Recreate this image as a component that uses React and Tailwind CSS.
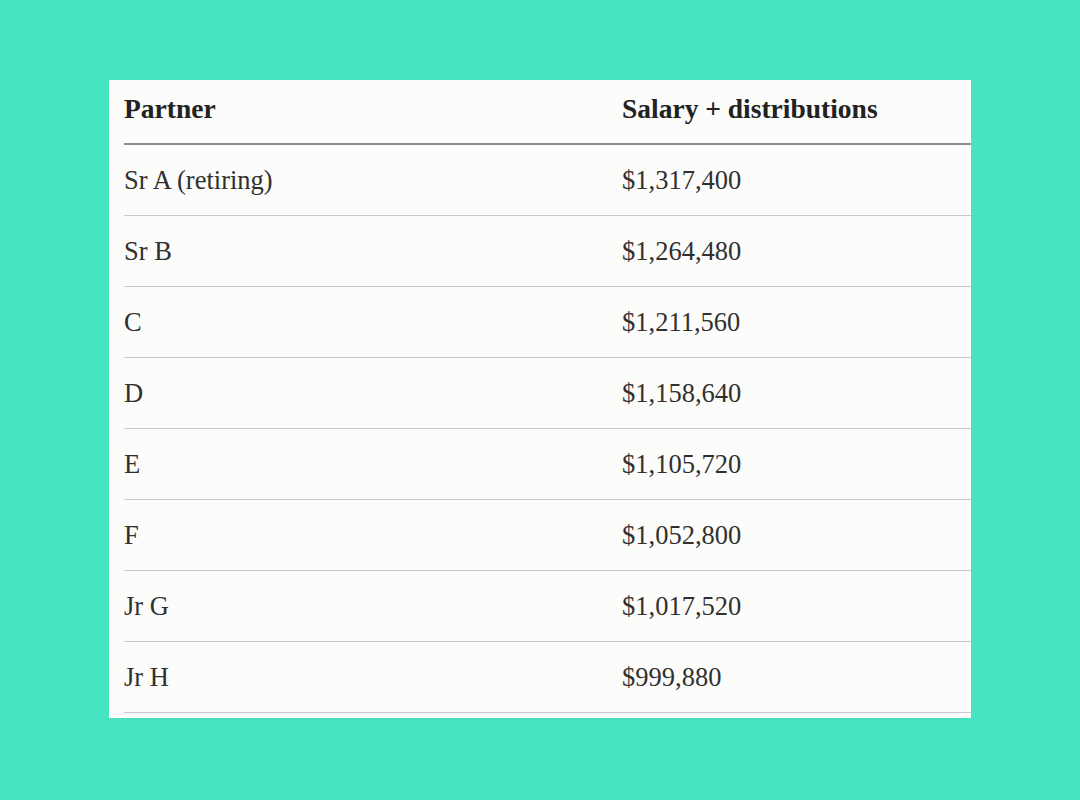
const rows = [
  ["Sr A (retiring)", "$1,317,400"],
  ["Sr B", "$1,264,480"],
  ["C", "$1,211,560"],
  ["D", "$1,158,640"],
  ["E", "$1,105,720"],
  ["F", "$1,052,800"],
  ["Jr G", "$1,017,520"],
  ["Jr H", "$999,880"],
];

export default function App() {
  return (
    <div className="flex h-[800px] w-full justify-center bg-[#46e3c0] pt-[80px] font-['Liberation_Serif',serif]">
      <div className="h-[638px] w-[862px] overflow-hidden bg-[#fcfcfa] pl-[15px]">
        <div className="flex h-[65px] items-center border-b-2 border-[#8c8c8c] pb-[6px] text-[27.5px] font-bold text-[#222222]">
          <div className="w-[498px]">Partner</div>
          <div>Salary + distributions</div>
        </div>
        {rows.map(([name, amount]) => (
          <div
            key={name}
            className="flex h-[71px] items-center border-b-[1.5px] border-[#c9c9c9] pt-[2px] text-[26.5px] text-[#303030]"
          >
            <div className="w-[498px]">{name}</div>
            <div>{amount}</div>
          </div>
        ))}
      </div>
    </div>
  );
}
